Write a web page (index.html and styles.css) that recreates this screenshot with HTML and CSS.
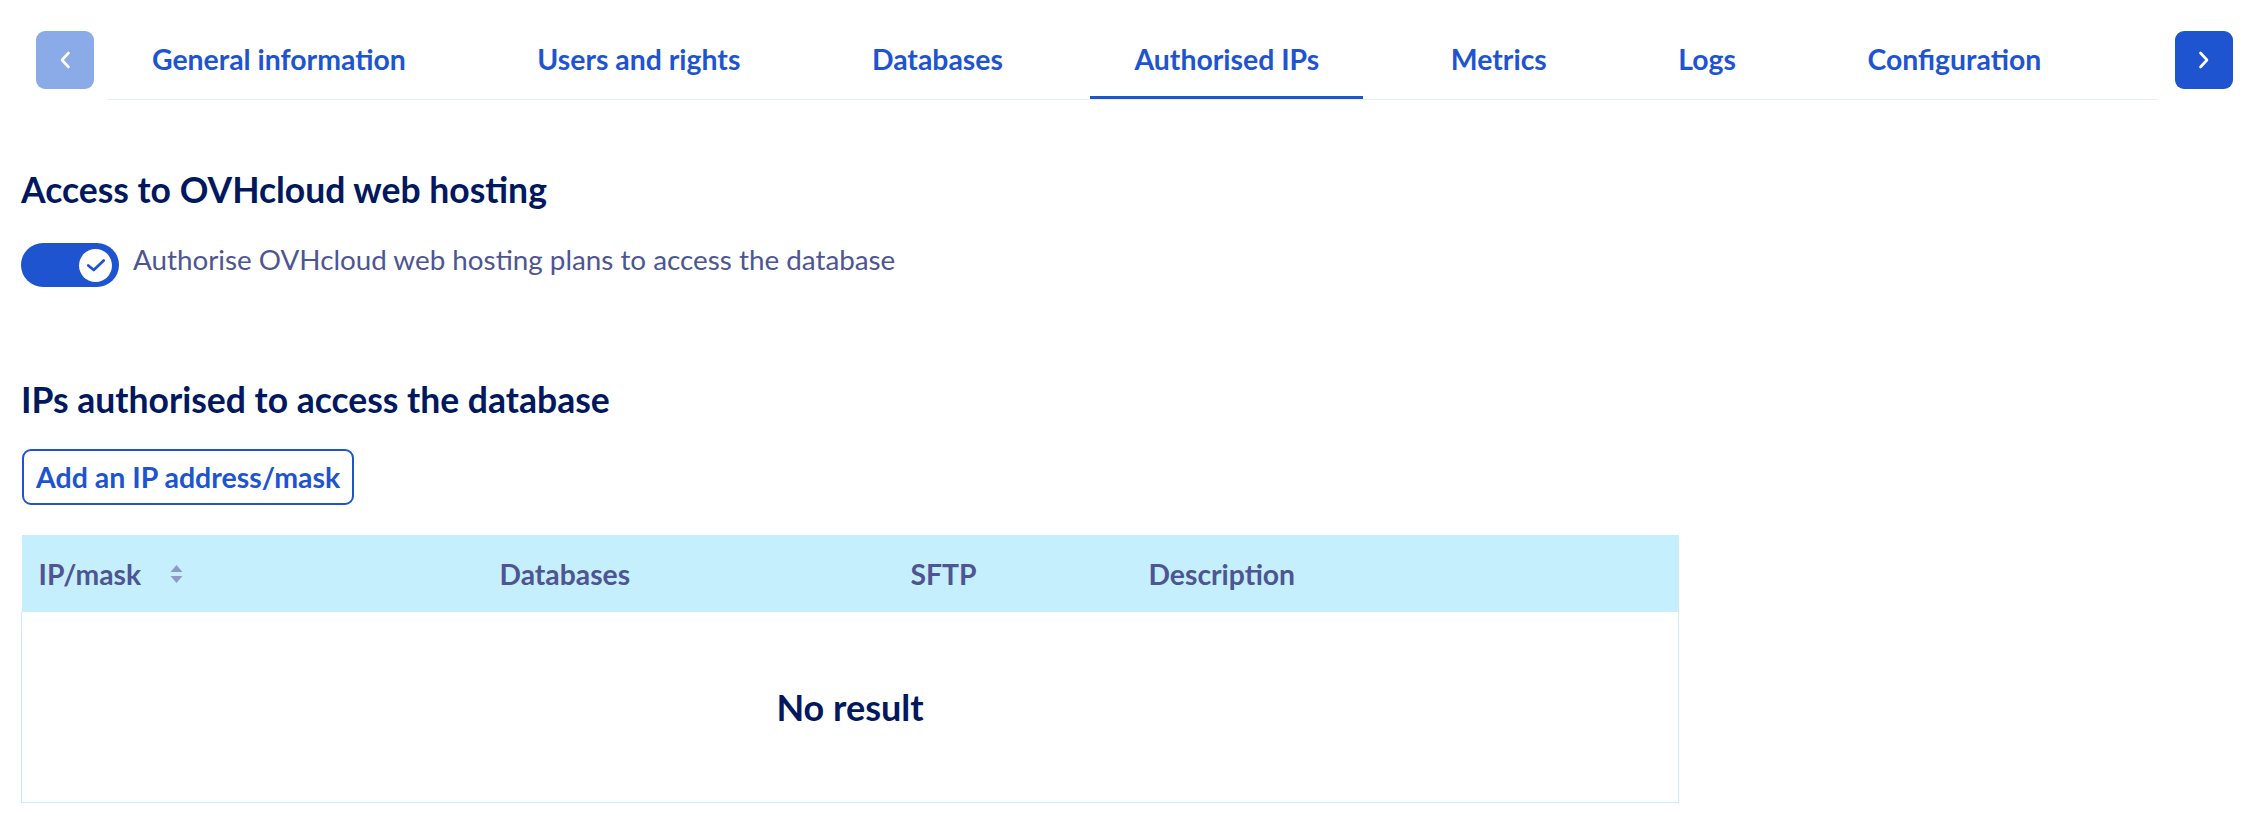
FILE: index.html
```html
<!DOCTYPE html>
<html lang="en">
<head>
<meta charset="utf-8">
<title>Authorised IPs</title>
<link rel="stylesheet" href="styles.css">
</head>
<body>
<header class="tabbar">
  <button class="nav-btn nav-btn--disabled" aria-label="Previous">
    <svg class="chev" viewBox="0 0 12 18" width="12" height="18"><path d="M9.5 2 L3 9 L9.5 16" fill="none" stroke="#fff" stroke-width="2.6" stroke-linecap="round" stroke-linejoin="round"/></svg>
  </button>
  <nav class="tabs">
    <a class="tab">General information</a>
    <a class="tab">Users and rights</a>
    <a class="tab">Databases</a>
    <a class="tab tab--active">Authorised IPs</a>
    <a class="tab">Metrics</a>
    <a class="tab">Logs</a>
    <a class="tab">Configuration</a>
  </nav>
  <button class="nav-btn" aria-label="Next">
    <svg class="chev" viewBox="0 0 12 18" width="12" height="18"><path d="M2.5 2 L9 9 L2.5 16" fill="none" stroke="#fff" stroke-width="2.6" stroke-linecap="round" stroke-linejoin="round"/></svg>
  </button>
</header>

<main class="content">
  <h2 class="heading heading--first">Access to OVHcloud web hosting</h2>
  <div class="switch-row">
    <span class="switch">
      <span class="knob">
        <svg viewBox="0 0 22 15" width="20" height="14"><path d="M2.5 8 L8.5 13 L19.5 2.5" fill="none" stroke="#1e54d0" stroke-width="3" stroke-linecap="round" stroke-linejoin="round"/></svg>
      </span>
    </span>
    <span class="switch-label">Authorise OVHcloud web hosting plans to access the database</span>
  </div>

  <h2 class="heading heading--second">IPs authorised to access the database</h2>
  <button class="btn-outline">Add an IP address/mask</button>

  <table class="datagrid">
    <colgroup>
      <col class="col-ip">
      <col class="col-db">
      <col class="col-sftp">
      <col class="col-desc">
    </colgroup>
    <thead>
      <tr>
        <th><span class="th-sort">IP/mask
          <svg class="sort" viewBox="0 0 13 20" width="13" height="20"><path d="M0.5 8 L6.5 1 L12.5 8 Z" fill="#8d9bc3"/><path d="M0.5 12 L12.5 12 L6.5 19 Z" fill="#8d9bc3"/></svg></span></th>
        <th>Databases</th>
        <th>SFTP</th>
        <th>Description</th>
      </tr>
    </thead>
    <tbody>
      <tr>
        <td class="empty" colspan="4">No result</td>
      </tr>
    </tbody>
  </table>
</main>
</body>
</html>
```

FILE: styles.css
```css
* { box-sizing: border-box; }

html, body {
  margin: 0;
  padding: 0;
  background: #ffffff;
}

body {
  font-family: "Lato", "Liberation Sans", sans-serif;
  color: #4d5592;
}

/* ---------- tab bar ---------- */
.tabbar {
  display: flex;
  align-items: flex-start;
  padding: 31px 21px 0 36px;
}

.nav-btn {
  flex: 0 0 auto;
  width: 58px;
  height: 58px;
  border: 0;
  border-radius: 9px;
  background: #1e54d0;
  display: flex;
  align-items: center;
  justify-content: center;
  padding: 0;
  margin: 0;
}

.nav-btn--disabled {
  background: #8aaae8;
}

.chev { display: block; }

.tabs {
  flex: 1 1 auto;
  display: flex;
  gap: 43.5px;
  margin: 0 17px 0 14px;
  border-bottom: 1px solid #e6eef6;
}

.tab {
  padding: 8px 44px 17px;
  line-height: 40px;
  font-size: 28.4px;
  font-weight: 700;
  color: #1e54d0;
  white-space: nowrap;
  border-bottom: 3px solid transparent;
}

.tab--active {
  border-bottom-color: #1e54d0;
}

/* ---------- content ---------- */
.content {
  padding: 0 21px;
}

.heading {
  margin: 0;
  font-size: 35.5px;
  line-height: 44px;
  font-weight: 700;
  color: #00185e;
}

.heading--first { margin-top: 68px; }
.heading--second { margin-top: 91px; }

.switch-row {
  display: flex;
  align-items: flex-start;
  gap: 14px;
  margin-top: 31px;
}

.switch {
  flex: 0 0 auto;
  width: 98px;
  height: 44px;
  border-radius: 22px;
  background: #1e54d0;
  display: flex;
  align-items: center;
  justify-content: flex-end;
  padding-right: 7px;
}

.knob {
  width: 33px;
  height: 33px;
  border-radius: 50%;
  background: #ffffff;
  display: flex;
  align-items: center;
  justify-content: center;
}

.knob svg { display: block; }

.switch-label {
  font-size: 27.8px;
  line-height: 36px;
  margin-top: -1px;
  color: #4d5592;
}

.btn-outline {
  display: inline-flex;
  align-items: center;
  height: 56px;
  margin: 27px 0 0 1px;
  padding: 0 12px;
  border: 2px solid #1e54d0;
  border-radius: 9px;
  background: #ffffff;
  font-family: "Lato", "Liberation Sans", sans-serif;
  font-size: 28.5px;
  font-weight: 700;
  color: #1e54d0;
}

/* ---------- table ---------- */
.datagrid {
  display: table;
  margin-top: 30px;
  width: 1657px;
  border-collapse: collapse;
  table-layout: fixed;
}

.col-ip { width: 461px; }
.col-db { width: 411px; }
.col-sftp { width: 238px; }
.col-desc { width: 547px; }

.datagrid thead tr {
  background: #c6effd;
}

.datagrid th {
  height: 77px;
  padding: 0 17px;
  text-align: left;
  vertical-align: middle;
  font-size: 28.3px;
  font-weight: 700;
  color: #4d5592;
  white-space: nowrap;
}

.th-sort {
  display: inline-flex;
  align-items: center;
  gap: 29px;
}

.sort { display: block; }

.datagrid td.empty {
  height: 190px;
  text-align: center;
  vertical-align: middle;
  font-size: 36px;
  font-weight: 700;
  color: #00185e;
  border: 1px solid #c6effd;
  border-top: 0;
}
```
